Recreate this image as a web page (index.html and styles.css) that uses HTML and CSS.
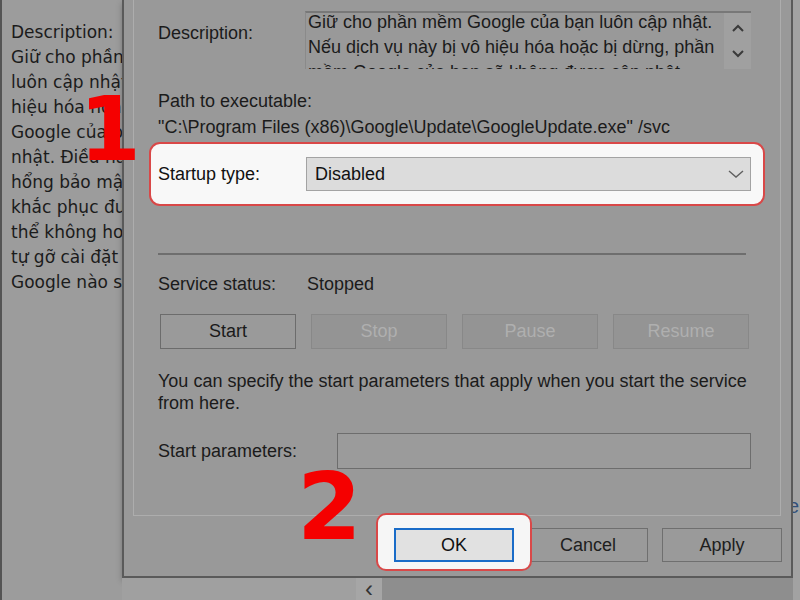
FILE: index.html
```html
<!DOCTYPE html>
<html lang="vi">
<head>
    <meta charset="UTF-8">
    <meta name="viewport" content="width=device-width, initial-scale=1.0">
    <title>GoogleUpdate Service Properties</title>
    <link rel="stylesheet" href="styles.css">
</head>
<body>
    <div class="screen">
        <aside class="side-desc">
            <p>Description:</p>
            <p>Giữ cho phần mềm Google của bạn</p>
            <p>luôn cập nhật. Nếu dịch vụ này bị vô</p>
            <p>hiệu hóa hoặc bị dừng, phần mềm</p>
            <p>Google của bạn sẽ không được cập</p>
            <p>nhật. Điều này có nghĩa là các lỗ</p>
            <p>hổng bảo mật có thể không được</p>
            <p>khắc phục được và các tính năng có</p>
            <p>thể không hoạt động. Dịch vụ này</p>
            <p>tự gỡ cài đặt khi không có phần mềm</p>
            <p>Google nào sử dụng nó.</p>
        </aside>

        <div class="main">
            <div class="dialog">
                <div class="tab-page">
                    <div class="row row-desc">
                        <span class="label">Description:</span>
                        <div class="desc-box">
                            <div class="desc-text">Giữ cho phần mềm Google của bạn luôn cập nhật.<br>Nếu dịch vụ này bị vô hiệu hóa hoặc bị dừng, phần<br>mềm Google của bạn sẽ không được cập nhật.</div>
                            <div class="scrollbar">
                                <svg width="14" height="10" viewBox="0 0 14 10"><polyline points="2,8 7,3 12,8" fill="none" stroke="#3a3a3a" stroke-width="2"/></svg>
                                <svg width="14" height="10" viewBox="0 0 14 10"><polyline points="2,2 7,7 12,2" fill="none" stroke="#3a3a3a" stroke-width="2"/></svg>
                            </div>
                        </div>
                    </div>

                    <div class="path-label">Path to executable:</div>
                    <div class="path">"C:\Program Files (x86)\Google\Update\GoogleUpdate.exe" /svc</div>

                    <div class="row startup">
                        <span class="label">Startup type:</span>
                        <div class="combo">
                            <span>Disabled</span>
                            <svg width="16" height="10" viewBox="0 0 16 10"><polyline points="1,2 8,8 15,2" fill="none" stroke="#606060" stroke-width="1.4"/></svg>
                        </div>
                    </div>

                    <hr class="sep">

                    <div class="row status">
                        <span class="label">Service status:</span>
                        <span>Stopped</span>
                    </div>

                    <div class="svc-buttons">
                        <button class="svc-btn">Start</button>
                        <button class="svc-btn" disabled>Stop</button>
                        <button class="svc-btn" disabled>Pause</button>
                        <button class="svc-btn" disabled>Resume</button>
                    </div>

                    <p class="hint">You can specify the start parameters that apply when you start the service<br>from here.</p>

                    <div class="row params">
                        <span class="label">Start parameters:</span>
                        <div class="param-input"></div>
                    </div>
                </div>

                <div class="dialog-buttons">
                    <span class="ok-highlight"><button class="btn btn-default">OK</button></span>
                    <button class="btn">Cancel</button>
                    <button class="btn">Apply</button>
                </div>
            </div>

            <div class="below">
                <div class="below-left"></div>
                <div class="below-arrow">&lsaquo;</div>
                <div class="below-rest"></div>
            </div>
        </div>

        <div class="right-edge"><span>e</span></div>

        <span class="step step-1">1</span>
        <span class="step step-2">2</span>
    </div>
</body>
</html>
```

FILE: styles.css
```css
* {
    box-sizing: border-box;
}
body {
    margin: 0;
    background: #9a9a9a;
    font-family: "Liberation Sans", Arial, sans-serif;
    color: #1b1b1b;
}
.screen {
    position: relative;
    display: flex;
    width: 800px;
    height: 600px;
    overflow: hidden;
}

/* left description column behind the dialog */
.side-desc {
    width: 122px;
    flex-shrink: 0;
    padding: 20px 0 0 9px;
    border-left: 2px solid #545454;
    background: #9c9c9c;
    font-family: "DejaVu Sans", sans-serif;
    font-size: 17px;
    line-height: 25px;
    white-space: nowrap;
    overflow: hidden;
}
.side-desc p {
    margin: 0;
}

.main {
    width: 671px;
    flex-shrink: 0;
    display: flex;
    flex-direction: column;
}
.dialog {
    height: 578px;
    background: #999;
    border: 2px solid #5a5a5a;
    border-top: none;
    box-shadow: 0 3px 6px rgba(0,0,0,0.25);
    font-size: 18px;
}
.tab-page {
    margin: -2px 10px 0 9px;
    height: 518px;
    border: 1px solid #adadad;
    padding: 12px 29px 0 24px;
}
.row {
    display: flex;
    align-items: center;
}
.label {
    width: 148px;
    flex-shrink: 0;
    line-height: 22px;
}

.row-desc {
    align-items: flex-start;
}
.row-desc .label {
    margin-top: 11px;
    width: 147px;
}
.desc-box {
    flex: 1;
    height: 58px;
    display: flex;
    border-top: 2px solid #787878;
    border-left: 1px solid #8a8a8a;
    overflow: hidden;
}
.desc-text {
    flex: 1;
    padding: 0 0 0 2px;
    margin-top: -3px;
    line-height: 25px;
    white-space: nowrap;
}
.scrollbar {
    width: 27px;
    background: #a0a0a0;
    display: flex;
    flex-direction: column;
    align-items: center;
    gap: 16px;
    padding-top: 10px;
}
.scrollbar svg {
    display: block;
}

.path-label {
    margin-top: 21px;
    line-height: 22px;
}
.path {
    margin-top: 4px;
    line-height: 22px;
}

.startup {
    margin: 4px -14px 0 -9px;
    height: 64px;
    padding: 0 12px 0 7px;
    background: #f8f8f8;
    border: 2px solid #d94848;
    border-radius: 11px;
    color: #111;
}
.combo {
    flex: 1;
    height: 34px;
    display: flex;
    align-items: center;
    justify-content: space-between;
    padding: 0 6px 0 8px;
    background: #dcdcdc;
    border: 1px solid #a3a3a3;
}

.sep {
    margin: 47px 5px 0 0;
    border: none;
    border-top: 2px solid #6e6e6e;
}

.status {
    margin-top: 18px;
}
.status .label {
    width: 149px;
}

.svc-buttons {
    display: grid;
    grid-template-columns: repeat(4, 1fr);
    gap: 15px;
    margin: 19px 2px 0 2px;
}
.svc-btn {
    height: 35px;
    font: inherit;
    color: #1a1a1a;
    background: #9a9a9a;
    border: 1px solid #6c6c6c;
}
.svc-btn:disabled {
    color: #afafaf;
    background: #949494;
    border-color: #888;
}

.hint {
    margin: 21px 0 0 0;
    line-height: 22px;
}

.params {
    margin-top: 19px;
}
.params .label {
    width: 179px;
}
.param-input {
    flex: 1;
    height: 36px;
    border: 1px solid #6d6d6d;
    background: #9b9b9b;
}

.dialog-buttons {
    display: flex;
    justify-content: flex-end;
    gap: 14px;
    margin-top: 12px;
    padding-right: 9px;
}
.btn {
    width: 120px;
    height: 34px;
    font: inherit;
    color: #1e1e1e;
    background: #9a9a9a;
    border: 1px solid #6f6f6f;
}
.ok-highlight {
    position: relative;
    z-index: 1;
    margin: -15px -18px -9px -18px;
    padding: 13px 16px 7px 16px;
    background: #f6f6f6;
    border: 2px solid #d94848;
    border-radius: 10px;
}
.btn-default {
    display: block;
    color: #111;
    background: #e1e1e1;
    border: 2px solid #1a6cc8;
}

.below {
    flex: 1;
    display: flex;
}
.below-left {
    width: 234px;
    background: #a0a0a0;
}
.below-arrow {
    width: 26px;
    background: #a6a6a6;
    text-align: center;
    font-size: 24px;
    line-height: 22px;
    color: #333;
}
.below-rest {
    flex: 1;
    background: #8e8e8e;
}

.right-edge {
    flex: 1;
    background: #a2a2a2;
    overflow: hidden;
    padding-top: 495px;
    font-size: 20px;
    color: #30507a;
}
.right-edge span {
    display: block;
    margin-left: -5px;
}

/* annotation numbers */
.step {
    position: absolute;
    color: #f50000;
    font-family: "DejaVu Sans", sans-serif;
    font-weight: bold;
    line-height: 1;
}
.step-1 {
    left: 79px;
    top: 85px;
    font-size: 89px;
}
.step-2 {
    left: 297px;
    top: 461px;
    font-size: 93px;
}
```
